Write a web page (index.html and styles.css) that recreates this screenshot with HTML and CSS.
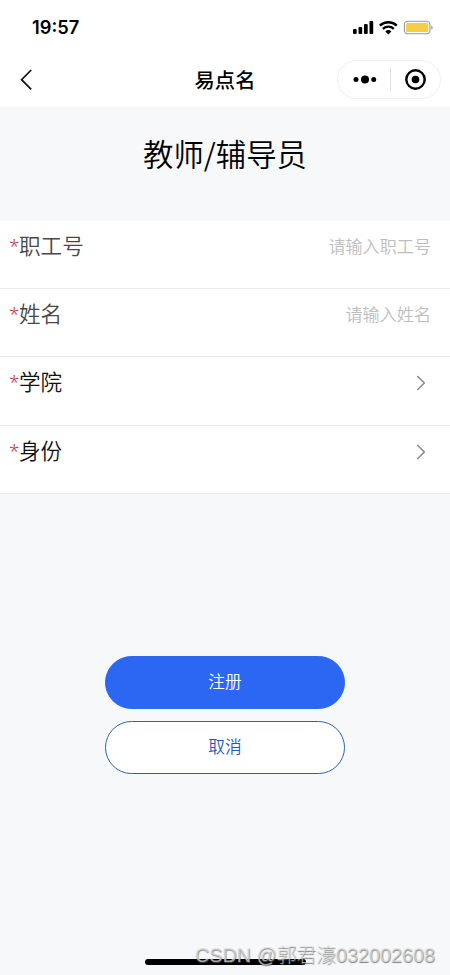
FILE: index.html
```html
<!DOCTYPE html>
<html lang="zh-CN">
<head>
  <meta charset="UTF-8">
  <meta name="viewport" content="width=device-width, initial-scale=1.0">
  <title>易点名</title>
  <link rel="stylesheet" href="styles.css">
</head>
<body>
  <div class="page">
    <div class="status-bar">
      <span class="time">19:57</span>
      <svg class="status-icons" width="82" height="16" viewBox="0 0 82 16">
        <rect x="1" y="9" width="3.7" height="5" rx="1"/>
        <rect x="6.5" y="7" width="3.7" height="7" rx="1"/>
        <rect x="12" y="4" width="3.7" height="10" rx="1"/>
        <rect x="17.5" y="1" width="3.7" height="13" rx="1"/>
        <g fill="none" stroke="#000" stroke-width="2.4">
          <path d="M27.9 5.6a12.2 12.2 0 0 1 16.9 0"/>
          <path d="M30.9 8.8a8 8 0 0 1 10.9 0"/>
        </g>
        <path d="M33.3 11.4a4.5 4.5 0 0 1 6.1 0L36.35 14.4z"/>
        <rect x="52.4" y="1.2" width="25.6" height="12.6" rx="3.6" fill="#fff" stroke="#999" stroke-width="1.1"/>
        <rect x="54.1" y="2.9" width="22.2" height="9.2" rx="1.5" fill="#f6cd46"/>
        <path d="M79.4 5.4q2.4 2.1 0 4.2z" fill="#888"/>
      </svg>
    </div>

    <div class="nav-bar">
      <svg class="icon-back" width="14" height="22" viewBox="0 0 14 22">
        <path d="M11.2 1L1.6 10.7l9.6 9.7" fill="none" stroke="#111" stroke-width="1.7"/>
      </svg>
      <h1>易点名</h1>
      <div class="capsule">
        <svg width="24" height="10" viewBox="0 0 24 10">
          <circle cx="3" cy="4.5" r="2.5"/>
          <circle cx="12" cy="4.5" r="4"/>
          <circle cx="20.7" cy="4.5" r="2.5"/>
        </svg>
        <span class="capsule-line"></span>
        <svg width="22" height="22" viewBox="0 0 22 22">
          <circle cx="11.5" cy="10.5" r="9.2" fill="none" stroke="#000" stroke-width="2.4"/>
          <circle cx="11.5" cy="10.5" r="3.8"/>
        </svg>
      </div>
    </div>

    <h2>教师/辅导员</h2>

    <div class="form">
      <label class="row">
        <span class="star">*</span>
        <span class="label">职工号</span>
        <input class="input-info" type="text" placeholder="请输入职工号">
      </label>
      <label class="row">
        <span class="star">*</span>
        <span class="label">姓名</span>
        <input class="input-info" type="text" placeholder="请输入姓名">
      </label>
      <div class="row">
        <span class="star">*</span>
        <span class="label label-dark">学院</span>
        <svg class="arrow" width="10" height="16" viewBox="0 0 10 16">
          <path d="M1.3 1l7 7-7 7" fill="none" stroke="#888" stroke-width="1.5"/>
        </svg>
      </div>
      <div class="row">
        <span class="star">*</span>
        <span class="label label-dark">身份</span>
        <svg class="arrow" width="10" height="16" viewBox="0 0 10 16">
          <path d="M1.3 1l7 7-7 7" fill="none" stroke="#888" stroke-width="1.5"/>
        </svg>
      </div>
    </div>

    <div class="box-btn">
      <button class="btn btn-join" type="button">注册</button>
      <button class="btn btn-cancel" type="button">取消</button>
    </div>

    <div class="home-bar"></div>
    <p class="watermark">CSDN @郭君濠032002608</p>
  </div>
</body>
</html>
```
FILE: styles.css
```css
* { margin: 0; padding: 0; box-sizing: border-box; }
body {
  font-family: "Noto Sans CJK SC", sans-serif;
  background-color: #f6f8fa;
}
.page {
  position: relative;
  width: 450px; height: 975px;
  overflow: hidden;
  display: flex;
  flex-direction: column;
}

/* top */
.status-bar {
  height: 53px;
  padding: 2px 16px 0 32px;
  background-color: #fff;
  display: flex;
  justify-content: space-between;
  align-items: center;
}
.time {
  font-family: Inter, sans-serif;
  font-size: 18.3px; font-weight: 600;
  line-height: 22px;
  padding-bottom: 1px;
}
.nav-bar {
  height: 53px;
  padding: 0 9px 0 20px;
  background-color: #fff;
  display: grid;
  grid-template-columns: 104px 1fr 104px;
  align-items: center;
}
h1 {
  font-size: 20.3px; font-weight: 500;
  line-height: 30px;
  text-align: center;
  padding: 0 11px 2px 0;
}
.capsule {
  width: 104px; height: 39px;
  border: 1px solid #efefef; border-radius: 20px;
  padding: 0 14px 0 15px;
  display: flex;
  justify-content: space-between;
  align-items: center;
}
.capsule-line { width: 1px; height: 23px; background-color: #e0e0e0; }
h2 {
  height: 115px;
  font-size: 30.4px; font-weight: 350;
  line-height: 94px;
  text-align: center;
  color: #000;
}

/* form */
.form { background-color: #fff; }
.row {
  height: 68.2px;
  padding: 6px 19px 0 9px;
  border-bottom: 1.5px solid #ebebed;
  display: flex;
  align-items: flex-start;
}
.star {
  width: 10px;
  font-family: "Noto Sans", sans-serif;
  font-size: 19px; font-weight: 300;
  line-height: 38px;
  color: #c8323c;
}
.label {
  font-size: 21.6px; font-weight: 350;
  line-height: 36px;
  color: #484848;
}
.label-dark { color: #111; }
.input-info {
  flex: 1;
  min-width: 0; height: 37px;
  border: none;
  outline: none;
  background: none;
  font-family: inherit;
  font-size: 17.1px; font-weight: 350;
  text-align: right;
}
.input-info::placeholder { color: #bebebe; }
.arrow { margin: 12px 5px 0 auto; }

/* buttons */
.box-btn {
  width: 240px;
  margin: 162px auto 0;
  display: flex;
  flex-direction: column;
  gap: 12px;
}
.btn {
  height: 53px;
  border: 1px solid #2b67f3; border-radius: 27px;
  font-family: inherit;
  font-size: 16.7px; font-weight: 350;
  line-height: 48px;
  padding-bottom: 3px;
  cursor: pointer;
}
.btn-join { background-color: #2b67f3; color: #fff; }
.btn-cancel { background-color: #fff; color: #1f5ac0; border-color: #2860b8; }

.home-bar {
  width: 161px; height: 6px;
  border-radius: 3px;
  background-color: #000;
  margin: auto auto 10px;
}
.watermark {
  position: absolute;
  right: 15px; bottom: 6px;
  font-family: "Liberation Sans", "Noto Sans CJK SC", sans-serif;
  font-size: 19.8px; font-weight: 300;
  line-height: 28px;
  color: rgba(225, 225, 225, 0.7);
  text-shadow: 0.5px 0.5px 1px rgba(90, 90, 90, 0.75);
  white-space: nowrap;
}
```
